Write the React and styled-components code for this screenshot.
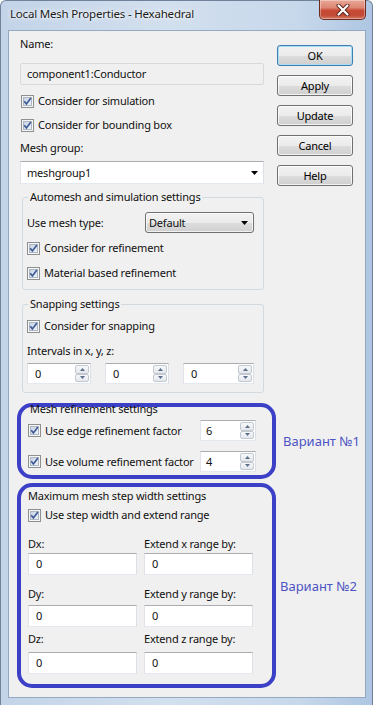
import React from 'react';
import styled, { createGlobalStyle } from 'styled-components';

const Global = createGlobalStyle`
  html, body { margin: 0; padding: 0; background: #ffffff; }
  body {
    font-family: "Noto Sans", "Open Sans", sans-serif;
    font-size: 11px;
    letter-spacing: -0.2px;
    color: #111;
  }
  #root { width: 374px; height: 705px; }
  * { box-sizing: border-box; }
`;

const Window = styled.div`
  width: 373px;
  height: 705px;
  background: linear-gradient(to right, #c3d4e8 0%, #d2dfee 45%, #c7d8eb 80%, #aec6e2 100%);
  border: 1px solid #6f8299;
  border-bottom: none;
  border-radius: 6px 6px 0 0;
  display: flex;
  flex-direction: column;
  padding: 0 6px 7px 7px;
`;

const TitleBar = styled.div`
  height: 29px;
  display: flex;
  align-items: flex-start;
`;

const Title = styled.div`
  margin: 5px 0 0 2px;
  line-height: 16px;
  font-size: 11.5px;
  color: #1b1b1b;
  text-shadow: 0 0 6px #ffffff, 0 0 3px #ffffff;
`;

const CloseButton = styled.div`
  margin-left: auto;
  margin-top: -1px;
  width: 47px;
  height: 20px;
  border: 1px solid #6b2a20;
  border-top: none;
  border-radius: 0 0 5px 5px;
  background: linear-gradient(to bottom, #eaa797 0%, #dc8774 40%, #c94a35 55%, #c14a36 80%, #d47a64 100%);
  box-shadow: inset 0 0 0 1px rgba(255, 255, 255, 0.35);
  display: flex;
  align-items: center;
  justify-content: center;
`;

const Client = styled.div`
  flex: 1;
  background: #f0f0f0;
  border: 1px solid #94a8c0;
  display: flex;
  flex-direction: column;
  padding-top: 5px;
`;

const TopGrid = styled.div`
  display: grid;
  grid-template-columns: 268px 76px;
  align-items: start;
`;

const LeftColumn = styled.div`
  display: flex;
  flex-direction: column;
  padding-left: 11px;
`;

const ButtonColumn = styled.div`
  display: flex;
  flex-direction: column;
  gap: 9px;
  padding-top: 9px;
`;

const Label = styled.div`
  line-height: 16px;
  height: 16px;
  white-space: nowrap;
  margin-top: ${p => p.$mt || 0}px;
  padding-left: ${p => p.$pl || 0}px;
`;

const ReadOnlyBox = styled.div`
  width: 244px;
  height: 22px;
  margin-top: 11px;
  border: 1px solid #d9d9d9;
  border-radius: 2px;
  background: #f0f0f0;
  padding-left: 6px;
  line-height: 20px;
`;

const CheckRow = styled.div`
  display: flex;
  align-items: center;
  gap: 4px;
  height: 16px;
  line-height: 16px;
  white-space: nowrap;
  margin-top: ${p => p.$mt || 0}px;
  padding-left: ${p => p.$pl || 0}px;
`;

const PlainCombo = styled.div`
  width: 244px;
  height: 23px;
  margin-top: 5px;
  background: #ffffff;
  border: 1px solid;
  border-color: #abadb3 #dbdfe6 #e3e9ef #e2e3ea;
  display: flex;
  align-items: center;
  padding: 0 5px 0 6px;
`;

const ComboText = styled.span`
  flex: 1;
`;

const DialogButton = styled.div`
  width: 76px;
  height: 21px;
  border: 1px solid ${p => (p.$default ? '#3c7fb1' : '#707070')};
  border-radius: 3px;
  background: linear-gradient(to bottom, #f2f2f2 0%, #ebebeb 50%, #dddddd 51%, #cfcfcf 100%);
  box-shadow: inset 0 0 0 1px ${p => (p.$default ? '#a9dcf5' : 'rgba(255,255,255,0.75)')};
  display: flex;
  align-items: center;
  justify-content: center;
  line-height: 16px;
  color: #000;
`;

const Group = styled.fieldset`
  margin: ${p => p.$mt}px 0 0 13px;
  width: 242px;
  border: 1px solid #d2dae0;
  border-radius: 3px;
  padding: ${p => p.$pt}px 8px 8px 4px;
  min-width: 0;
  display: flex;
  flex-direction: column;
`;

const Legend = styled.legend`
  line-height: 16px;
  padding: 0 2px;
  margin-left: 1px;
  white-space: nowrap;
`;

const MeshTypeRow = styled.div`
  display: flex;
  align-items: center;
  height: 21px;
`;

const MeshTypeLabel = styled.span`
  width: 118px;
  line-height: 16px;
`;

const ListCombo = styled.div`
  width: 109px;
  height: 21px;
  border: 1px solid #707070;
  border-radius: 3px;
  background: linear-gradient(to bottom, #f2f2f2 0%, #ebebeb 50%, #dddddd 51%, #cfcfcf 100%);
  box-shadow: inset 0 0 0 1px rgba(255, 255, 255, 0.7);
  display: flex;
  align-items: center;
  padding: 0 5px 0 3px;
`;

const SpinGrid = styled.div`
  display: grid;
  grid-template-columns: 64px 64px 71px;
  column-gap: 14px;
  margin-top: 4px;
`;

const SpinBox = styled.div`
  display: flex;
  height: 21px;
  width: ${p => p.$w || 'auto'};
  background: #ffffff;
  border: 1px solid;
  border-color: #abadb3 #dbdfe6 #e3e9ef #e2e3ea;
  margin-left: ${p => p.$ml || '0'};
`;

const SpinValue = styled.div`
  flex: 1;
  padding-left: ${p => p.$pl || 7}px;
  line-height: 19px;
`;

const SpinButtons = styled.div`
  display: flex;
  flex-direction: column;
  width: 14px;
  margin: 1px 1px 1px 0;
`;

const SpinButton = styled.div`
  flex: 1;
  border: 1px solid #c3c9d1;
  border-radius: 2px;
  background: linear-gradient(to bottom, #f7f8fa, #e3e7ec);
  display: flex;
  align-items: center;
  justify-content: center;
`;

const AnnotRow = styled.div`
  display: flex;
  align-items: center;
  margin-top: ${p => p.$mt}px;
`;

const BlueFrame = styled.div`
  margin-left: 8px;
  width: 259px;
  border: 4px solid #3c40c6;
  border-radius: 15px;
  display: flex;
  flex-direction: column;
  padding: 0 0 ${p => p.$pb}px 0;
`;

const FactorRow = styled.div`
  display: flex;
  align-items: center;
  height: 21px;
  padding: 0 16px 0 7px;
  margin-top: ${p => p.$mt}px;
`;

const Annotation = styled.div`
  margin-left: ${p => p.$ml}px;
  font-size: 13px;
  letter-spacing: 0;
  color: #4d53c4;
  white-space: nowrap;
`;

const StepGrid = styled.div`
  display: grid;
  grid-template-columns: 109px 109px;
  column-gap: 7px;
  padding-left: 7px;
  margin-top: ${p => p.$mt}px;
`;

const TextInput = styled.div`
  height: 22px;
  background: #ffffff;
  border: 1px solid;
  border-color: #abadb3 #dbdfe6 #e3e9ef #e2e3ea;
  padding-left: 7px;
  line-height: 20px;
  margin-top: ${p => p.$mt}px;
`;

const CheckBox = () => (
  <svg width="13" height="13" viewBox="0 0 13 13" style={{ flex: 'none' }}>
    <defs>
      <linearGradient id="cbfill" x1="0" y1="0" x2="1" y2="1">
        <stop offset="0" stopColor="#c5d1e2" />
        <stop offset="1" stopColor="#f1f5fa" />
      </linearGradient>
    </defs>
    <rect x="0.5" y="0.5" width="12" height="12" fill="#f5f6f8" stroke="#8e8f8f" />
    <rect x="2.5" y="2.5" width="8" height="8" fill="url(#cbfill)" stroke="#aeb6c2" />
    <path d="M3.2 6.3 L5.4 8.9 L9.9 3.1" fill="none" stroke="#3f5b96" strokeWidth="1.7" />
  </svg>
);

const ComboArrow = () => (
  <svg width="7" height="4" viewBox="0 0 7 4">
    <path d="M0 0 H7 L3.5 4 Z" fill="#000" />
  </svg>
);

const SpinArrow = ({ down }) => (
  <svg width="5" height="3" viewBox="0 0 5 3">
    <path d={down ? 'M0 0 H5 L2.5 3 Z' : 'M0 3 H5 L2.5 0 Z'} fill="#5b6f8c" />
  </svg>
);

const CloseGlyph = () => (
  <svg width="14" height="12" viewBox="0 0 14 12">
    <path d="M2.5 1.5 L11.5 10.5 M11.5 1.5 L2.5 10.5" stroke="#5a2219" strokeWidth="4" strokeLinecap="round" />
    <path d="M2.5 1.5 L11.5 10.5 M11.5 1.5 L2.5 10.5" stroke="#ffffff" strokeWidth="2.2" strokeLinecap="round" />
  </svg>
);

const Spin = ({ value, w, ml, pl }) => (
  <SpinBox $w={w} $ml={ml}>
    <SpinValue $pl={pl}>{value}</SpinValue>
    <SpinButtons>
      <SpinButton><SpinArrow /></SpinButton>
      <SpinButton><SpinArrow down /></SpinButton>
    </SpinButtons>
  </SpinBox>
);

export default function App() {
  return (
    <>
      <Global />
      <Window>
        <TitleBar>
          <Title>Local Mesh Properties - Hexahedral</Title>
          <CloseButton><CloseGlyph /></CloseButton>
        </TitleBar>
        <Client>
          <TopGrid>
            <LeftColumn>
              <Label>Name:</Label>
              <ReadOnlyBox>component1:Conductor</ReadOnlyBox>
              <CheckRow $mt={8} $pl={1}><CheckBox />Consider for simulation</CheckRow>
              <CheckRow $mt={8} $pl={1}><CheckBox />Consider for bounding box</CheckRow>
              <Label $mt={7}>Mesh group:</Label>
              <PlainCombo>
                <ComboText>meshgroup1</ComboText>
                <ComboArrow />
              </PlainCombo>
            </LeftColumn>
            <ButtonColumn>
              <DialogButton $default>OK</DialogButton>
              <DialogButton>Apply</DialogButton>
              <DialogButton>Update</DialogButton>
              <DialogButton>Cancel</DialogButton>
              <DialogButton>Help</DialogButton>
            </ButtonColumn>
          </TopGrid>

          <Group $mt={3} $pt={7}>
            <Legend>Automesh and simulation settings</Legend>
            <MeshTypeRow>
              <MeshTypeLabel>Use mesh type:</MeshTypeLabel>
              <ListCombo>
                <ComboText>Default</ComboText>
                <ComboArrow />
              </ListCombo>
            </MeshTypeRow>
            <CheckRow $mt={7}><CheckBox />Consider for refinement</CheckRow>
            <CheckRow $mt={9}><CheckBox />Material based refinement</CheckRow>
          </Group>

          <Group $mt={6} $pt={6}>
            <Legend>Snapping settings</Legend>
            <CheckRow><CheckBox />Consider for snapping</CheckRow>
            <Label $mt={9}>Intervals in x, y, z:</Label>
            <SpinGrid>
              <Spin value="0" />
              <Spin value="0" />
              <Spin value="0" />
            </SpinGrid>
          </Group>

          <AnnotRow $mt={10}>
            <BlueFrame $pb={3}>
              <Label $mt={-6} $pl={9}>Mesh refinement settings</Label>
              <FactorRow $mt={3}>
                <CheckRow><CheckBox />Use edge refinement factor</CheckRow>
                <Spin value="6" w="56px" ml="auto" pl={5} />
              </FactorRow>
              <FactorRow $mt={10}>
                <CheckRow><CheckBox />Use volume refinement factor</CheckRow>
                <Spin value="4" w="56px" ml="auto" pl={5} />
              </FactorRow>
            </BlueFrame>
            <Annotation $ml={7}>Вариант №1</Annotation>
          </AnnotRow>

          <AnnotRow $mt={4}>
            <BlueFrame $pb={10}>
              <Label $mt={1} $pl={7}>Maximum mesh step width settings</Label>
              <CheckRow $mt={3} $pl={7}><CheckBox />Use step width and extend range</CheckRow>
              <StepGrid $mt={13}>
                <Label>Dx:</Label>
                <Label>Extend x range by:</Label>
                <TextInput $mt={1}>0</TextInput>
                <TextInput $mt={1}>0</TextInput>
              </StepGrid>
              <StepGrid $mt={11}>
                <Label>Dy:</Label>
                <Label>Extend y range by:</Label>
                <TextInput $mt={3}>0</TextInput>
                <TextInput $mt={3}>0</TextInput>
              </StepGrid>
              <StepGrid $mt={4}>
                <Label>Dz:</Label>
                <Label>Extend z range by:</Label>
                <TextInput $mt={5}>0</TextInput>
                <TextInput $mt={5}>0</TextInput>
              </StepGrid>
            </BlueFrame>
            <Annotation $ml={4}>Вариант №2</Annotation>
          </AnnotRow>
        </Client>
      </Window>
    </>
  );
}
